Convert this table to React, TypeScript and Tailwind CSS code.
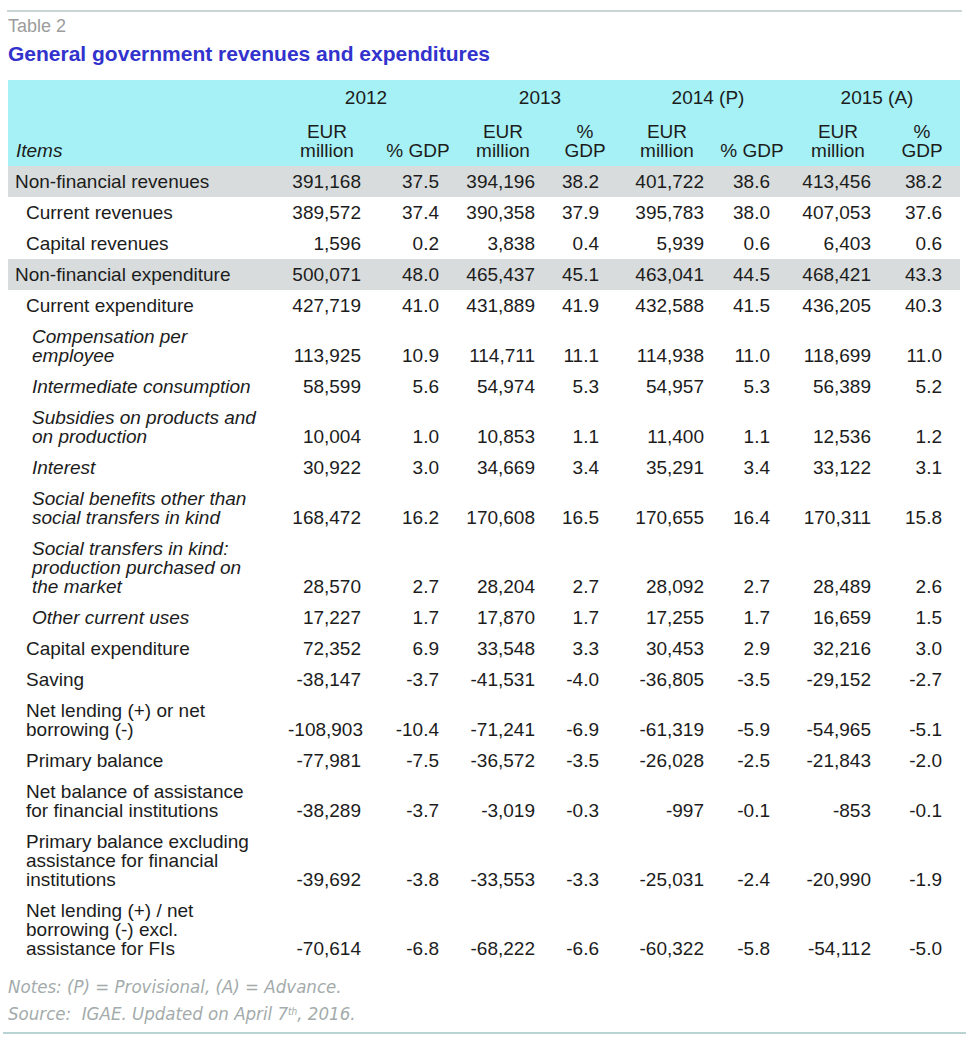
import React from "react";

type Row = { label: string[]; lvl: 0 | 1 | 2; gray?: boolean; v: string[] };

const rows: Row[] = [
  { label: ["Non-financial revenues"], lvl: 0, gray: true, v: ["391,168", "37.5", "394,196", "38.2", "401,722", "38.6", "413,456", "38.2"] },
  { label: ["Current revenues"], lvl: 1, v: ["389,572", "37.4", "390,358", "37.9", "395,783", "38.0", "407,053", "37.6"] },
  { label: ["Capital revenues"], lvl: 1, v: ["1,596", "0.2", "3,838", "0.4", "5,939", "0.6", "6,403", "0.6"] },
  { label: ["Non-financial expenditure"], lvl: 0, gray: true, v: ["500,071", "48.0", "465,437", "45.1", "463,041", "44.5", "468,421", "43.3"] },
  { label: ["Current expenditure"], lvl: 1, v: ["427,719", "41.0", "431,889", "41.9", "432,588", "41.5", "436,205", "40.3"] },
  { label: ["Compensation per", "employee"], lvl: 2, v: ["113,925", "10.9", "114,711", "11.1", "114,938", "11.0", "118,699", "11.0"] },
  { label: ["Intermediate consumption"], lvl: 2, v: ["58,599", "5.6", "54,974", "5.3", "54,957", "5.3", "56,389", "5.2"] },
  { label: ["Subsidies on products and", "on production"], lvl: 2, v: ["10,004", "1.0", "10,853", "1.1", "11,400", "1.1", "12,536", "1.2"] },
  { label: ["Interest"], lvl: 2, v: ["30,922", "3.0", "34,669", "3.4", "35,291", "3.4", "33,122", "3.1"] },
  { label: ["Social benefits other than", "social transfers in kind"], lvl: 2, v: ["168,472", "16.2", "170,608", "16.5", "170,655", "16.4", "170,311", "15.8"] },
  { label: ["Social transfers in kind:", "production purchased on", "the market"], lvl: 2, v: ["28,570", "2.7", "28,204", "2.7", "28,092", "2.7", "28,489", "2.6"] },
  { label: ["Other current uses"], lvl: 2, v: ["17,227", "1.7", "17,870", "1.7", "17,255", "1.7", "16,659", "1.5"] },
  { label: ["Capital expenditure"], lvl: 1, v: ["72,352", "6.9", "33,548", "3.3", "30,453", "2.9", "32,216", "3.0"] },
  { label: ["Saving"], lvl: 1, v: ["-38,147", "-3.7", "-41,531", "-4.0", "-36,805", "-3.5", "-29,152", "-2.7"] },
  { label: ["Net lending (+) or net", "borrowing (-)"], lvl: 1, v: ["-108,903", "-10.4", "-71,241", "-6.9", "-61,319", "-5.9", "-54,965", "-5.1"] },
  { label: ["Primary balance"], lvl: 1, v: ["-77,981", "-7.5", "-36,572", "-3.5", "-26,028", "-2.5", "-21,843", "-2.0"] },
  { label: ["Net balance of assistance", "for financial institutions"], lvl: 1, v: ["-38,289", "-3.7", "-3,019", "-0.3", "-997", "-0.1", "-853", "-0.1"] },
  { label: ["Primary balance excluding", "assistance for financial", "institutions"], lvl: 1, v: ["-39,692", "-3.8", "-33,553", "-3.3", "-25,031", "-2.4", "-20,990", "-1.9"] },
  { label: ["Net lending (+) / net", "borrowing (-) excl.", "assistance for FIs"], lvl: 1, v: ["-70,614", "-6.8", "-68,222", "-6.6", "-60,322", "-5.8", "-54,112", "-5.0"] },
];

const GRID = "grid grid-cols-[280px_80px_78px_96px_64px_105px_66px_101px_82px]";
const lvlClass = ["pl-[7px]", "pl-[18px]", "pl-[24px] italic"];

export default function App() {
  return (
    <div
      className="w-[969px] h-[1040px] bg-white text-[#1c1c1c] px-[7px] pt-[10px]"
      style={{ fontFamily: '"Liberation Sans", Arial, sans-serif' }}
    >
      <div className="border-t-2 border-[#c9d6d6]" />
      <div className="pl-[1px] pt-[5px] text-[18px] leading-[19px] text-[#9c9c9c]">Table 2</div>
      <div className="pl-[1px] pt-[8px] text-[21px] leading-[19px] font-bold text-[#3232cc]">
        General government revenues and expenditures
      </div>

      <div className="mt-[17px] ml-[1px] w-[952px] text-[19px] leading-[19px]">
        {/* header */}
        <div className={`${GRID} grid-rows-[19px_38px] gap-y-[15px] bg-[#a6f1f5] pt-[8px] pb-[6px]`}>
          <div className="row-span-2 row-start-1 col-start-1 self-end pl-[8px] italic">Items</div>
          <div className="row-start-1 col-start-2 col-span-2 flex justify-center pr-[2px]">2012</div>
          <div className="row-start-1 col-start-4 col-span-2 flex justify-center pl-[28px]">2013</div>
          <div className="row-start-1 col-start-6 col-span-2 flex justify-center pl-[33px] whitespace-nowrap">2014 (P)</div>
          <div className="row-start-1 col-start-8 col-span-2 flex justify-center pl-[17px] whitespace-nowrap">2015 (A)</div>

          <div className="row-start-2 col-start-2 flex flex-col items-center justify-end pr-[2px]"><span>EUR</span><span>million</span></div>
          <div className="row-start-2 col-start-3 flex items-end justify-center pl-[22px] whitespace-nowrap">% GDP</div>
          <div className="row-start-2 col-start-4 flex flex-col items-center justify-end pl-[18px]"><span>EUR</span><span>million</span></div>
          <div className="row-start-2 col-start-5 flex flex-col items-center justify-end pl-[22px]"><span>%</span><span>GDP</span></div>
          <div className="row-start-2 col-start-6 flex flex-col items-center justify-end pl-[17px]"><span>EUR</span><span>million</span></div>
          <div className="row-start-2 col-start-7 flex items-end justify-center pl-[16px] whitespace-nowrap">% GDP</div>
          <div className="row-start-2 col-start-8 flex flex-col items-center justify-end pl-[21px]"><span>EUR</span><span>million</span></div>
          <div className="row-start-2 col-start-9 flex flex-col items-center justify-end pl-[6px]"><span>%</span><span>GDP</span></div>
        </div>

        {/* body */}
        {rows.map((r, i) => (
          <div key={i} className={`${GRID} items-end py-[6px] ${r.gray ? "bg-[#d8dcdc]" : ""}`}>
            <div className={`${lvlClass[r.lvl]} flex flex-col whitespace-nowrap`}>
              {r.label.map((l, j) => (
                <span key={j}>{l}</span>
              ))}
            </div>
            {r.v.map((v, j) => (
              <div key={j} className={`text-right ${j === 7 ? "pr-[18px]" : "pr-[7px]"}`}>
                {v}
              </div>
            ))}
          </div>
        ))}
      </div>

      <div
        className="mt-[9px] pl-[1px] text-[18.5px] leading-[27px] italic text-[#a3abab]"
        style={{ fontFamily: '"Liberation Sans Narrow", "DejaVu Sans Condensed", sans-serif' }}
      >
        <div>Notes: (P) = Provisional, (A) = Advance.</div>
        <div>
          Source:&nbsp; IGAE. Updated on April 7<sup className="text-[10px]">th</sup>, 2016.
        </div>
      </div>
      <div className="mt-[5px] -mx-[4px] border-t-2 border-[#b9d2d2]" />
    </div>
  );
}
